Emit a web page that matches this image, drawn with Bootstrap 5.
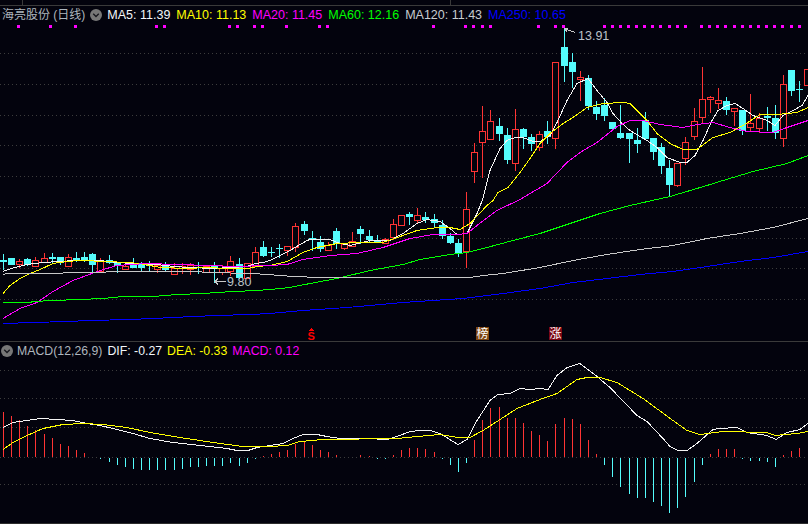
<!DOCTYPE html>
<html lang="zh">
<head>
<meta charset="utf-8">
<title>海亮股份 (日线)</title>
<link href="https://cdn.jsdelivr.net/npm/bootstrap@5.3.0/dist/css/bootstrap.min.css" rel="stylesheet">
<style>
html,body{margin:0;padding:0;background:#03030d;overflow:hidden}
.kline-page{width:808px;height:524px;background:#03030d;font-family:"Liberation Sans","Noto Sans CJK SC",sans-serif;font-size:12.5px;line-height:18px}
.top-strip{display:block;height:5px;width:808px}
.pane-rule{border-top:1px solid #3a3a3a}
.legend-row{height:18px;padding-left:1px;white-space:nowrap;column-gap:6px}
.legend-tight{column-gap:5px;font-size:12.3px}
.price-svg{display:block;width:808px;height:317px}
.macd-svg{display:block;width:808px;height:163px}
.drop-ico{display:block;width:12px;height:12px;margin-right:-1px;flex:none}
.name-cn{font-size:12px;margin-left:1px;margin-right:-1px}
.c-title{color:#aeb6be}.c-white{color:#f2f6fa}.c-yellow{color:#ffff00}.c-pink{color:#ff00ff}.c-green{color:#00ff00}.c-grey{color:#c8ccd0}.c-blue{color:#0000ff}
.anno{font-family:"Liberation Sans",sans-serif;font-size:12.5px;fill:#bcc2c8}
.tag-cn{font-family:"Noto Sans CJK SC",sans-serif;font-size:12px;fill:#fff}
.tag-s{font-family:"Liberation Sans",sans-serif;font-size:11px;font-weight:700;fill:#ff0000}
.end-rule{border-top:1px solid #2c2c2c}
</style>
</head>
<body>
<div class="kline-page d-flex flex-column">
  <svg class="top-strip" viewBox="0 0 808 5" aria-hidden="true"><rect x="22" y="0" width="1" height="5" fill="#3a3a3a"/><rect x="450" y="0" width="1" height="5" fill="#3a3a3a"/></svg>
  <section class="pane-rule">
    <div class="legend-row d-flex align-items-center">
      <span class="c-title name-cn">海亮股份 (日线)</span>
      <svg class="drop-ico" viewBox="0 0 13 13"><circle cx="6.5" cy="6.5" r="6.5" fill="#777"/><path d="M3.5 5.2l3 3 3-3" fill="none" stroke="#16161c" stroke-width="1.4"/></svg>
      <span class="c-white">MA5: 11.39</span>
      <span class="c-yellow">MA10: 11.13</span>
      <span class="c-pink">MA20: 11.45</span>
      <span class="c-green">MA60: 12.16</span>
      <span class="c-grey">MA120: 11.43</span>
      <span class="c-blue">MA250: 10.65</span>
    </div>
    <svg id="price" class="price-svg" viewBox="0 24 808 317" shape-rendering="crispEdges"></svg>
  </section>
  <section class="pane-rule">
    <div class="legend-row legend-tight d-flex align-items-center">
      <svg class="drop-ico" viewBox="0 0 13 13"><circle cx="6.5" cy="6.5" r="6.5" fill="#777"/><path d="M3.5 5.2l3 3 3-3" fill="none" stroke="#16161c" stroke-width="1.4"/></svg>
      <span class="c-title">MACD(12,26,9)</span>
      <span class="c-white">DIF: -0.27</span>
      <span class="c-yellow">DEA: -0.33</span>
      <span class="c-pink">MACD: 0.12</span>
    </div>
    <svg id="macd" class="macd-svg" viewBox="0 360 808 163" shape-rendering="crispEdges"></svg>
  </section>
  <div class="end-rule"></div>
</div>
<script src="https://cdn.jsdelivr.net/npm/bootstrap@5.3.0/dist/js/bootstrap.bundle.min.js"></script>
<script>
var RED='#ff3434',CYAN='#54fcfc';
var colX=function(i){return Math.floor(3.4+8.125*i)};
/* [up, bodyTop, bodyBottom, wickTop, wickBottom] */
var K=[[0,260,262,254,270],[0,258,265,258,265],[1,261,264,259,268],[0,259,265,258,266],[1,260,266,257,266],[1,258,262,253,263],[0,257,259,253,264],[0,257,263,257,265],[1,257,266,254,266],[0,258,260,252,262],
[0,257,261,252,262],[0,254,265,253,272],[1,260,271,258,271],[0,260,263,255,264],[0,263,266,262,273],[1,266,269,265,270],[0,265,268,258,268],[0,264,268,262,272],[0,264,266,261,271],[1,265,269,263,273],
[0,264,270,262,271],[1,268,274,263,274],[1,266,268,263,274],[1,265,269,263,275],[0,267,268,262,274],[1,266,272,266,272],[0,266,268,262,283],[1,268,272,265,275],[1,261,271,256,276],[0,264,278,258,279],
[1,263,278,263,278],[1,252,266,247,266],[0,247,256,241,257],[0,252,253,247,257],[0,248,249,244,258],[1,246,250,246,256],[1,226,247,223,252],[0,224,231,221,235],[0,238,239,231,251],[0,242,249,236,252],
[1,245,250,242,250],[0,231,244,228,249],[1,244,248,244,250],[1,241,246,232,246],[0,229,234,226,244],[0,236,240,230,243],[0,240,242,235,243],[1,239,243,238,243],[1,224,237,219,240],[1,215,225,215,226],
[0,214,217,212,225],[1,215,220,208,223],[0,217,220,212,223],[0,219,223,214,227],[0,225,236,220,239],[0,236,243,233,244],[0,243,253,239,257],[1,209,251,192,268],[1,152,171,143,183],[1,131,142,106,178],
[1,121,139,110,139],[0,126,134,118,141],[0,135,160,128,164],[1,129,163,109,171],[0,129,137,128,149],[0,137,144,134,151],[1,134,147,131,151],[0,131,137,121,144],[1,62,138,62,149],[0,47,66,28,82],
[0,62,72,53,88],[1,77,79,71,101],[0,78,106,75,110],[0,107,114,101,120],[0,105,116,98,121],[0,122,129,122,131],[0,133,138,105,139],[0,133,139,133,163],[0,140,144,128,153],[0,120,139,112,140],
[0,138,152,138,160],[0,147,166,143,174],[0,168,185,160,196],[1,163,185,163,187],[1,142,158,137,165],[1,121,136,108,140],[1,99,117,67,123],[1,97,99,96,113],[1,100,103,88,109],[0,101,110,97,115],
[1,108,111,108,126],[0,110,131,110,135],[1,123,127,94,131],[1,118,128,113,133],[0,116,118,107,131],[0,118,133,105,139],[1,84,138,75,147],[0,70,91,70,96],[0,89,90,81,102],[1,69,85,69,85]];
var MA={
'#f4f4f4':[3,271,11,268,19,266,27,264,43,262,59,261,75,260,100,260,117,262,133,263,157,264,174,266,190,267,214,268,231,267,247,266,255,263,263,262,270,260,290,250,307,240,310,239,330,239,340,243,350,245,370,240,390,240,403,233,417,223,427,219,440,221,450,228,457,234,467,233,477,213,483,198,490,170,500,148,507,140,515,137,523,137,533,141,540,141,550,135,557,122,567,100,577,83,588,78,597,90,607,102,613,113,622,123,630,130,647,140,657,147,667,157,680,162,687,162,695,155,703,140,712,120,718,110,727,105,735,103,743,108,753,115,767,120,775,125,783,115,793,110,802,105,808,95],
'#ffff00':[3,293,10,285,20,278,30,273,40,269,53,263,67,261,80,260,107,261,127,262,140,263,160,267,187,268,207,267,227,268,248,268,257,266,270,265,287,261,303,252,317,247,337,243,360,242,383,242,403,235,417,230,437,227,450,227,460,229,470,223,487,205,493,200,498,192,508,187,520,172,530,158,540,143,550,133,563,123,573,117,587,107,603,103,623,102,630,103,647,120,657,133,670,143,683,149,697,149,713,137,730,132,743,125,760,114,777,114,797,112,808,107],
'#ff00ff':[3,318,20,308,37,302,53,291,73,280,100,270,117,265,147,263,177,264,210,265,233,266,270,265,287,264,303,259,330,255,357,253,383,247,410,238,433,234,457,234,467,233,477,225,497,210,520,199,547,183,567,162,580,152,597,142,617,126,630,120,643,120,660,124,683,127,697,124,713,122,730,127,747,131,773,132,787,127,808,120],
'#00ff00':[3,302,30,302,33,301,53,300,80,299,103,298,123,296,153,296,177,294,203,293,233,291,257,290,270,289,290,287,310,283,337,278,370,270,403,264,420,259,450,254,467,252,487,247,513,240,540,233,570,223,600,213,630,205,670,196,707,185,723,180,753,171,787,163,808,155],
'#c8c8c8':[3,274,7,273,47,273,80,272,133,271,193,271,210,272,250,273,270,274,277,275,317,277,350,277,470,277,483,275,503,273,540,267,573,260,607,254,640,249,673,245,707,238,740,233,773,227,808,218],
'#0000ff':[3,323,33,322,67,321,90,320,130,319,153,318,193,316,217,315,250,314,270,313,303,310,347,307,403,302,463,298,503,293,540,288,573,282,607,278,640,274,673,271,707,266,740,261,773,257,808,251]};
var GRID=[53,84,115,145,176,207,238,268,299],GRID2=[370,398,427,457,484];
/* top y of each histogram bar; 457 = zero axis */
var H=[412,416,420,426,430,434,438,444,446,450,453,457,458,461,464,466,468,469,469,469,469,469,468,466,466,465,465,465,462,465,462,458,456,454,452,450,444,442,445,450,452,455,457,457,455,456,458,458,455,450,448,448,449,452,458,464,471,462,440,420,408,407,418,418,423,431,435,441,424,418,419,424,440,454,464,476,486,493,497,497,501,505,512,507,496,481,464,454,449,449,449,458,460,460,461,466,455,451,448,457];
var DIF=[3,427,13,422,27,420,40,418,57,419,73,420,87,423,100,425,113,428,133,433,150,438,173,442,200,445,227,448,237,450,248,450,257,447,270,445,283,443,293,438,303,434,317,434,327,436,340,438,367,438,387,439,397,436,410,431,420,430,430,430,440,433,458,444,467,439,477,420,490,400,498,394,510,393,520,388,530,389,540,388,548,389,557,375,567,367,580,363,597,376,610,387,637,415,647,421,663,438,670,446,678,450,687,450,697,443,713,429,720,428,737,427,747,432,767,435,776,439,787,432,800,429,808,423];
var DEA=[3,449,13,442,27,435,43,428,63,424,83,423,103,424,127,427,150,432,180,437,213,442,243,446,270,446,287,445,300,441,323,439,397,438,417,436,440,434,458,437,470,437,483,430,500,419,517,408,540,399,557,393,577,379,587,377,600,377,617,382,643,398,673,420,687,430,700,434,723,431,767,432,775,435,797,433,808,431];
var TOPS=[18,50,75,156,164,229,237,254,262,286,319,327,433,465,473,482,490,538,555,563,604,612,620,628,636,644,652,660,669,677,685,701,709,717,725,734,742,750,758,766,774,782,791,799];
function rect(x,y,w,h,f){return '<rect x="'+x+'" y="'+y+'" width="'+w+'" height="'+h+'" fill="'+f+'"/>'}
function grid(ys){return ys.map(function(y){return '<line x1="0" x2="808" y1="'+(y+.5)+'" y2="'+(y+.5)+'" stroke="#3c3c3c" stroke-dasharray="1 3"/>'}).join('')}
function poly(a,c){var p=[];for(var i=0;i<a.length;i+=2)p.push(a[i]+','+(a[i+1]+.5));return '<polyline points="'+p.join(' ')+'" fill="none" stroke="'+c+'" stroke-width="1"/>'}
var s=grid(GRID);
TOPS.forEach(function(x){s+=rect(x-1,25,3,3,'#ff00ff')});
K.forEach(function(k,i){var x=colX(i);
  if(k[0]){s+=rect(x,k[3],1,Math.max(k[1]-k[3],0),RED)+rect(x,k[2],1,Math.max(k[4]-k[2],0),RED)+'<rect x="'+(x-2.5)+'" y="'+(k[1]+.5)+'" width="6" height="'+Math.max(k[2]-k[1],1)+'" fill="#03030d" stroke="'+RED+'"/>'}
  else{s+=rect(x,k[3],1,k[4]-k[3],CYAN)+rect(x-3,k[1],7,Math.max(k[2]-k[1],1),CYAN)}
});
Object.keys(MA).forEach(function(c){s+=poly(MA[c],c)});
s+='<polyline points="564,28.5 575,32.5" fill="none" stroke="#c8c8c8"/><polyline points="568,28.5 564.5,28.5 567,32" fill="none" stroke="#c8c8c8"/>';
s+='<text class="anno" x="578" y="40">13.91</text>';
s+='<polyline points="226,281.5 215,281.5" fill="none" stroke="#c8c8c8"/><polyline points="218,278.5 215,281.5 218,284.5" fill="none" stroke="#c8c8c8"/>';
s+='<text class="anno" x="227" y="286">9.80</text>';
s+='<path d="M311 328l3 3h-6z" fill="#ff0000"/><text class="tag-s" x="307.5" y="340">S</text>';
s+=rect(476,327,13,13,'#7e4510')+'<text class="tag-cn" x="476.5" y="338">榜</text>';
s+=rect(549,327,13,13,'#7a0612')+'<text class="tag-cn" x="549.5" y="338">涨</text>';
document.getElementById('price').innerHTML=s;
var m=grid(GRID2);
H.forEach(function(t,i){var x=colX(i);
  if(t<457)m+=rect(x,t,1,457-t,RED);else if(t>457)m+=rect(x,458,1,t-457,CYAN)});
m+=poly(DIF,'#f4f4f4')+poly(DEA,'#ffff00');
document.getElementById('macd').innerHTML=m;
</script>
</body>
</html>
